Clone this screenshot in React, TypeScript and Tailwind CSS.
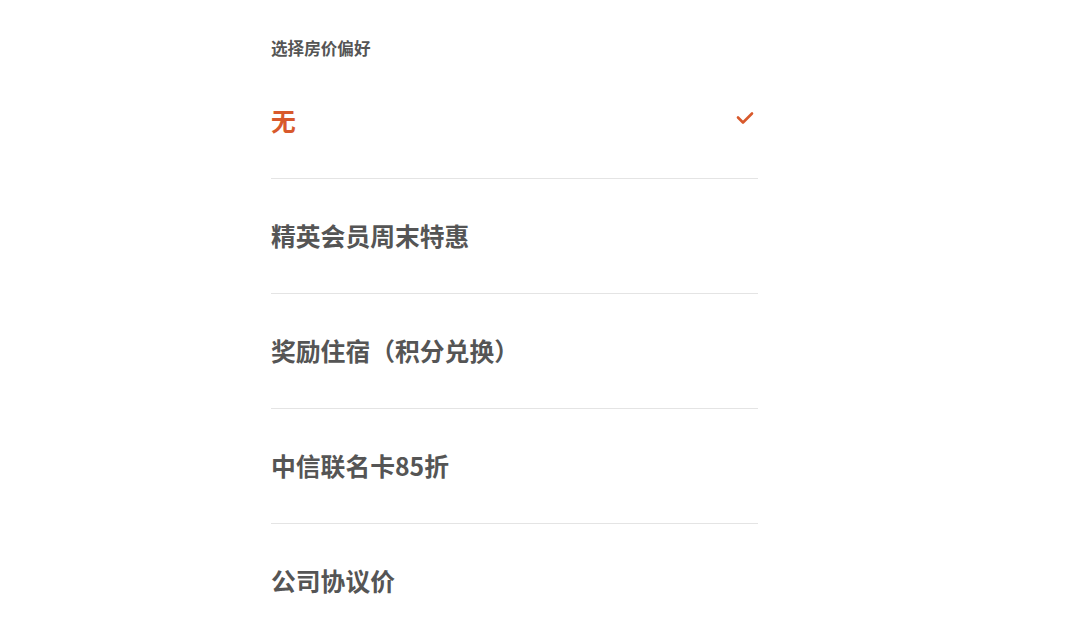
import React from "react";

const options = [
  "无",
  "精英会员周末特惠",
  "奖励住宿（积分兑换）",
  "中信联名卡85折",
  "公司协议价",
];

const Check = () => (
  <svg
    width="18"
    height="14"
    viewBox="0 0 18 14"
    fill="none"
    stroke="#d8592c"
    strokeWidth="2.6"
    strokeLinecap="round"
    strokeLinejoin="round"
  >
    <polyline points="2,6.5 7,11.5 16,2.5" />
  </svg>
);

export default function App() {
  const selected = 0;

  return (
    <div
      className="min-h-[623px] w-full bg-white"
      style={{ fontFamily: '"Noto Sans CJK SC", "Noto Sans", sans-serif' }}
    >
      <div className="ml-[271px] w-[487px]">
        <div className="mb-[4px] pt-[36px] text-[16.6px] font-semibold leading-6 text-[#555555]">
          选择房价偏好
        </div>
        <ul>
          {options.map((label, i) => (
            <li
              key={label}
              className="flex h-[115px] items-center justify-between border-b border-[#e4e4e4]"
            >
              <span
                className={`mb-[3px] text-[24.8px] font-bold leading-8 ${
                  i === selected ? "text-[#d8592c]" : "text-[#555555]"
                }`}
              >
                {label}
              </span>
              {i === selected && (
                <span className="mb-[7px] mr-[4px]">
                  <Check />
                </span>
              )}
            </li>
          ))}
        </ul>
      </div>
    </div>
  );
}
